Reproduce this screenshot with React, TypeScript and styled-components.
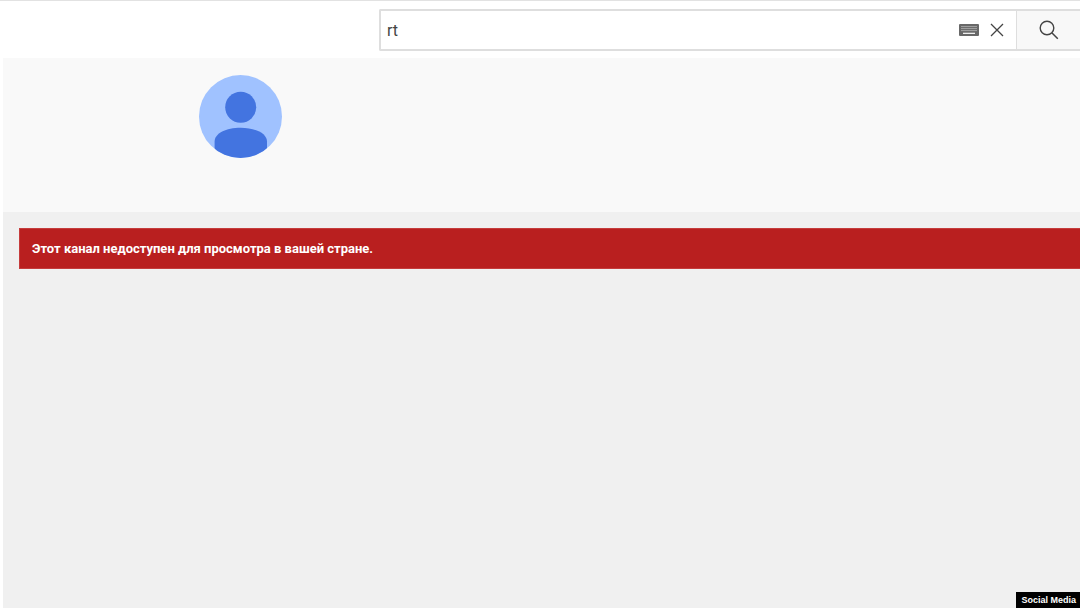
import React, { useState } from "react";
import styled, { createGlobalStyle } from "styled-components";

const GlobalStyle = createGlobalStyle`
  *, *::before, *::after { box-sizing: border-box; }
  body { margin: 0; background: #fff; font-family: Roboto, Arial, sans-serif; }
`;

const Page = styled.div`
  display: flex;
  flex-direction: column;
  min-height: 100vh;
`;

const Header = styled.header`
  height: 58px;
  padding: 8px 0 7px 379px;
  border-top: 1px solid #e2e2e2;
`;

const SearchForm = styled.form`
  display: flex;
  height: 42px;
`;

const SearchField = styled.div`
  flex: 1;
  min-width: 0;
  display: flex;
  align-items: center;
  gap: 3px;
  padding-right: 8px;
  border: 2px solid #dedede;
  border-right-width: 0;
  border-radius: 2px 0 0 2px;
`;

const SearchInput = styled.input`
  flex: 1;
  min-width: 0;
  height: 36px;
  padding: 0 6px;
  border: 0;
  outline: 0;
  background: none;
  color: #444;
  font: 400 16px/20px Roboto, Arial, sans-serif;
`;

const IconButton = styled.button`
  display: flex;
  padding: 4px;
  border: 0;
  background: none;
  cursor: pointer;
`;

const SearchButton = styled.button`
  display: flex;
  align-items: center;
  justify-content: center;
  width: 64px;
  padding: 0;
  border: solid #dedede;
  border-width: 2px 0 2px 1px;
  background: #f8f8f8;
  cursor: pointer;
`;

const Channel = styled.main`
  flex: 1;
  display: flex;
  flex-direction: column;
  margin-left: 3px;
  background: #f0f0f0;
`;

const ChannelHeader = styled.section`
  height: 154px;
  padding: 17px 196px;
  background: #f9f9f9;
`;

const Alert = styled.p`
  margin: 16px 0 0 16px;
  padding: 11px 12px 10px;
  border: solid #c53c3c;
  border-width: 1px 0 1px 1px;
  background: #b91f1f;
  color: #fff;
  font-size: 13px;
  font-weight: 700;
  line-height: 18px;
`;

const Credit = styled.footer`
  align-self: flex-end;
  margin-top: auto;
  padding: 0 4px 0 5px;
  background: #000;
  color: #fff;
  font: 700 9px/16px "Liberation Sans", Arial, sans-serif;
`;

const keyColumns = [2, 4, 6, 8, 10, 12, 14, 16];

const KeyboardIcon = () => (
  <svg width="20" height="12" viewBox="0 0 20 12" aria-hidden="true">
    <rect width="20" height="12" rx="1" fill="#686868" />
    <g fill="#c4c4c4">
      {[2, 4, 6].map((y) =>
        keyColumns.map((x) => <rect key={`${x}-${y}`} x={x + 0.4} y={y} width="1.2" height="1.1" />)
      )}
    </g>
    <rect x="4" y="8.7" width="12" height="1.3" fill="#eee" />
  </svg>
);

const CloseIcon = () => (
  <svg width="14" height="14" viewBox="0 0 14 14" aria-hidden="true">
    <path d="M1 1l12 12M13 1L1 13" stroke="#444" strokeWidth="1.3" fill="none" />
  </svg>
);

const SearchIcon = () => (
  <svg width="20" height="20" viewBox="0 0 20 20" aria-hidden="true">
    <circle cx="8" cy="8" r="6.8" fill="none" stroke="#444" strokeWidth="1.4" />
    <path d="M12.8 12.8L18.8 18.8" stroke="#444" strokeWidth="1.5" />
  </svg>
);

const Avatar = () => (
  <svg width="83" height="83" viewBox="0 0 83 83" role="img" aria-label="Аватар канала">
    <defs>
      <clipPath id="avatar-circle">
        <circle cx="41.5" cy="41.5" r="41.5" />
      </clipPath>
    </defs>
    <g clipPath="url(#avatar-circle)">
      <rect width="83" height="83" fill="#a0c2ff" />
      <g fill="#4374e0">
        <circle cx="41.7" cy="32.3" r="15.5" />
        <path d="M15.6 83V66.5C15.6 58.5 27 52.8 41.7 52.8S68 58.5 68 66.5V83z" />
      </g>
    </g>
  </svg>
);

export default function App() {
  const [query, setQuery] = useState("rt");

  return (
    <>
      <GlobalStyle />
      <Page>
        <Header>
          <SearchForm role="search" onSubmit={(event) => event.preventDefault()}>
            <SearchField>
              <SearchInput
                type="text"
                aria-label="Поиск"
                value={query}
                onChange={(event) => setQuery(event.target.value)}
              />
              <IconButton type="button" aria-label="Клавиатура">
                <KeyboardIcon />
              </IconButton>
              <IconButton type="button" aria-label="Очистить" onClick={() => setQuery("")}>
                <CloseIcon />
              </IconButton>
            </SearchField>
            <SearchButton type="submit" aria-label="Найти">
              <SearchIcon />
            </SearchButton>
          </SearchForm>
        </Header>
        <Channel>
          <ChannelHeader>
            <Avatar />
          </ChannelHeader>
          <Alert role="alert">Этот канал недоступен для просмотра в вашей стране.</Alert>
          <Credit>Social Media</Credit>
        </Channel>
      </Page>
    </>
  );
}
